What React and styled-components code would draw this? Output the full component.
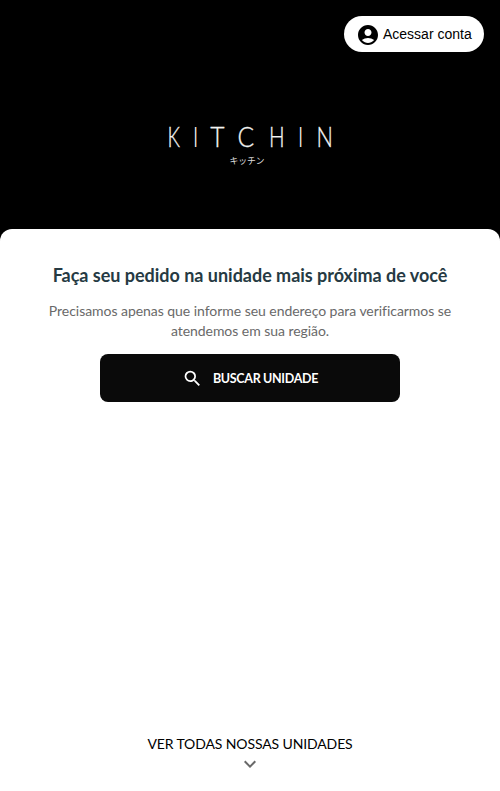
import React from 'react';
import { MdAccountCircle, MdKeyboardArrowDown, MdSearch } from 'react-icons/md';
import styled, { createGlobalStyle } from 'styled-components';

const GlobalStyles = createGlobalStyle`
  * {
    box-sizing: border-box;
  }

  body {
    margin: 0;
    background: #000;
    font-family: Lato, sans-serif;
  }

  button {
    border: 0;
    padding: 0;
    cursor: pointer;
  }
`;

const PageStyles = styled.div`
  display: flex;
  flex-direction: column;
  height: 100vh;
  background: #000;
`;

const HeaderStyles = styled.header`
  display: flex;
  flex-direction: column;
  align-items: center;
  flex: none;
  height: 229px;
  padding: 16px;
`;

const AccountButton = styled.button`
  display: flex;
  align-items: center;
  align-self: flex-end;
  gap: 3px;
  width: 140px;
  height: 36px;
  padding-left: 12px;
  border-radius: 18px;
  background: #fff;
  color: #000;
  font: 14px 'Liberation Sans', Arial, sans-serif;
  white-space: nowrap;

  svg {
    margin-top: 1px;
  }
`;

const LogoStyles = styled.svg`
  display: block;
  margin-top: 68px;
  fill: #f4f4f2;

  .kana {
    fill: #ddd;
    font: 400 8.8px 'Noto Sans CJK JP', sans-serif;
    text-anchor: middle;
  }
`;

const Letter = styled.text`
  font: 300 26.5px Lato, sans-serif;
  stroke: #f4f4f2;
  stroke-width: ${(props) => (props.$isThin ? '0' : '0.3px')};
  text-anchor: middle;
`;

const PanelStyles = styled.main`
  display: flex;
  flex-direction: column;
  align-items: center;
  flex: 1;
  padding: 35px 40px 15px;
  border-radius: 12px 12px 0 0;
  background: #fff;
  text-align: center;
`;

const Title = styled.h1`
  margin: 0;
  color: #263a43;
  font-size: 18px;
  font-weight: 700;
  letter-spacing: -0.02px;
  line-height: 22px;
  white-space: nowrap;
`;

const Description = styled.p`
  margin: 15px 0 13px;
  color: #696969;
  font-size: 14px;
  letter-spacing: -0.045px;
  line-height: 20px;
`;

const SearchButton = styled.button`
  display: flex;
  align-items: center;
  justify-content: center;
  gap: 10px;
  flex: none;
  width: 300px;
  height: 48px;
  border-radius: 8px;
  background: #0a0a0a;
  color: #fff;
  font: 700 12.5px Lato, sans-serif;
  letter-spacing: -0.32px;
`;

const UnitsButton = styled.button`
  display: flex;
  flex-direction: column;
  align-items: center;
  margin-top: auto;
  background: none;
  color: #000;
  font: 14px/20px Lato, sans-serif;
  letter-spacing: -0.12px;

  svg {
    margin-top: -2px;
    color: #696969;
  }
`;

const letters = [
  { char: 'K', x: 173.8, width: 0.74 },
  { char: 'I', x: 195.5, width: 0.9 },
  { char: 'T', x: 217.5, width: 0.93 },
  { char: 'C', x: 245.8, width: 0.93 },
  { char: 'H', x: 276.8, width: 0.78 },
  { char: 'I', x: 300.5, width: 0.9 },
  { char: 'N', x: 324.8, width: 0.82 },
];

const Logo = () => (
  <LogoStyles width="180" height="50" viewBox="160 120 180 50">
    {letters.map(({ char, x, width }) => (
      <Letter
        key={x}
        $isThin={char === 'I'}
        transform={`translate(${x} 147) scale(${width} 1)`}
      >
        {char}
      </Letter>
    ))}
    <text className="kana" x="247" y="164">
      キッチン
    </text>
  </LogoStyles>
);

const App = () => (
  <>
    <GlobalStyles />
    <PageStyles>
      <HeaderStyles>
        <AccountButton type="button">
          <MdAccountCircle size={24} />
          <span>Acessar conta</span>
        </AccountButton>
        <Logo />
      </HeaderStyles>
      <PanelStyles>
        <Title>Faça seu pedido na unidade mais próxima de você</Title>
        <Description>
          Precisamos apenas que informe seu endereço para verificarmos se
          atendemos em sua região.
        </Description>
        <SearchButton type="button">
          <MdSearch size={21} />
          <span>BUSCAR UNIDADE</span>
        </SearchButton>
        <UnitsButton type="button">
          <span>VER TODAS NOSSAS UNIDADES</span>
          <MdKeyboardArrowDown size={24} />
        </UnitsButton>
      </PanelStyles>
    </PageStyles>
  </>
);

export default App;
